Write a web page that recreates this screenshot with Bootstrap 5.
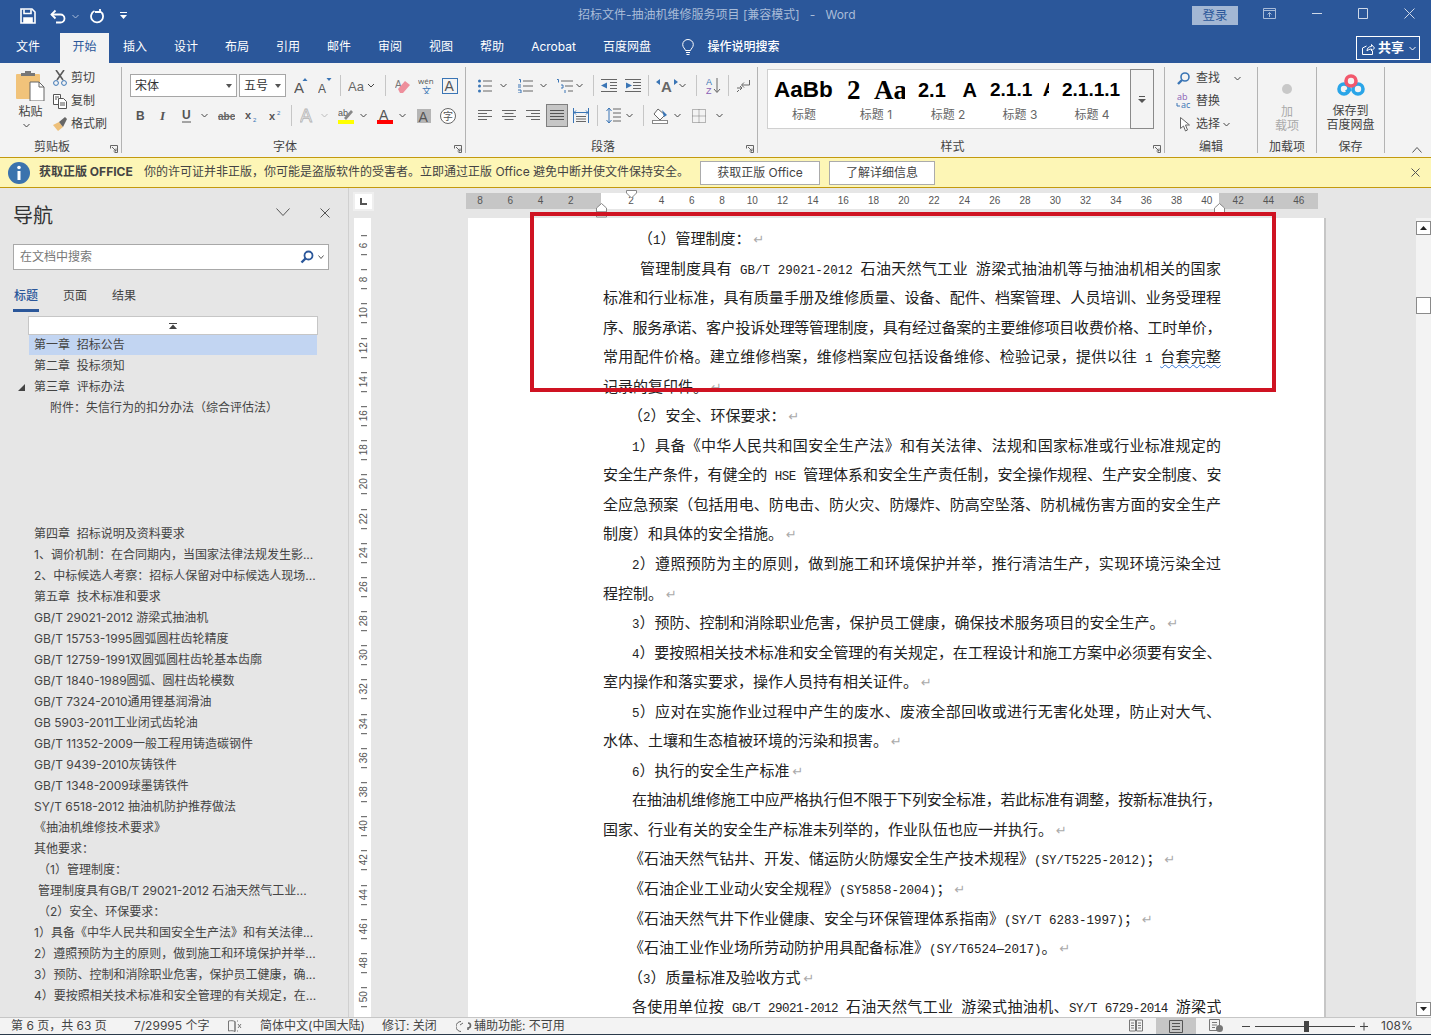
<!DOCTYPE html>
<html lang="zh-CN">
<head>
<meta charset="utf-8">
<title>招标文件-抽油机维修服务项目 - Word</title>
<link href="https://cdn.jsdelivr.net/npm/bootstrap@5.3.0/dist/css/bootstrap.min.css" rel="stylesheet">
<style>
html,body{height:100%;overflow:hidden}
body{font-family:Inter,"Noto Sans CJK SC",sans-serif;font-size:12px;color:#444;background:#e6e6e6;line-height:1.2}
svg{display:block;flex:none}
.titlebar{height:32px;background:#2b579a;color:#fff;position:relative}
.qat{padding-left:20px}
.doc-title{position:absolute;left:578px;top:8px;color:#a9bcd8;font-size:12px;white-space:nowrap}
.login{position:absolute;left:1192px;top:6px;width:46px;height:19px;background:#a3b7d4;color:#2b579a;text-align:center;line-height:19px;font-size:12.5px}
.winbtns{position:absolute;left:1263px;top:8px;gap:36px}
.tabbar{height:31px;background:#2b579a;color:#fff;position:relative}
.rtab{padding:0 12.5px;margin-right:2px;height:30px;margin-top:1px;line-height:27px;white-space:nowrap}
.rtab-first{padding:0 0 0 16px;width:60px;margin-right:0}
.rtab-on{background:#f3f3f3;color:#2b579a;width:49px;margin-right:1.5px}
.tell{margin-left:17px;line-height:28px;gap:13px;height:30px;font-weight:500}
.sharebtn{position:absolute;left:1356px;top:4px;width:64px;height:24px;border:1px solid #fff;gap:3px;padding-left:5px;font-weight:700;font-size:13px}
.ribbon{height:94px;background:#f3f3f3;position:relative;color:#444}
.rgroup{position:relative;height:86px;margin-top:4px;border-right:1px solid #b3b3b3;flex:none}
.w-clip{width:122px}.w-font{width:344px}.w-para{width:292px}.w-style{width:407px}.w-edit{width:93px}.w-add{width:59px}.w-save{width:68px}
.glabel{position:absolute;bottom:-2px;left:0;right:0;text-align:center;color:#444;line-height:16px}
.glabel-l{padding-right:17px}
.launcher{position:absolute;right:3px;bottom:0}
.rrow{position:absolute;display:flex;align-items:center}
.r1{top:7px;height:23px}.r2{top:37px;height:23px}
.r-font{left:8px}.r-para{left:12px}
.combo{height:23px;background:#fff;border:1px solid #a6a6a6;padding:0 4px;line-height:21px;color:#333;font-size:12px}
.combo-a{width:107px}.combo-b{width:47px;margin-left:2px}
.vsep{width:1px;height:21px;background:#c6c6c6;flex:none}
.mln3{margin-left:-3px}.ml1{margin-left:1px}.ml2{margin-left:2px}.ml3{margin-left:3px}.ml4{margin-left:4px}.ml5{margin-left:5px}.ml6{margin-left:6px}.ml7{margin-left:7px}.ml8{margin-left:8px}.ml9{margin-left:9px}.ml10{margin-left:10px}.ml11{margin-left:11px}.ml12{margin-left:12px}.ml14{margin-left:14px}.ml18{margin-left:18px}
.selbox{background:#c6c6c6;border:1px solid #7f7f7f;width:22px;height:23px;display:flex;align-items:center;justify-content:center}
.paste{position:absolute;left:15px;top:3px;width:31px;text-align:center}
.clip-item{position:absolute;left:53px;gap:4px;line-height:16px}
.ci1{top:3px}.ci2{top:26px}.ci3{top:49px}
.gallery{position:absolute;left:9px;top:2px;width:364px;height:60px;background:#fff;border:1px solid #d0d0d0;border-right:0}
.gitem{width:72px;flex:none;overflow:hidden;text-align:center;color:#666}
.gbig{width:65px;height:32px;color:#000;font-family:"Liberation Sans",sans-serif;font-weight:700;white-space:nowrap;text-align:left;padding-left:6px;font-size:20px;line-height:40px;overflow:hidden}
.gitem-sm{font-size:22.5px}
.gserif{font-family:"Liberation Serif",serif;font-size:27px;padding-left:7px}
.gs19{font-size:19px}
.gsub{line-height:16px;margin-top:5px;font-size:12px}
.gnext{position:absolute;left:372px;top:2px;width:24px;height:60px;border:1px solid #8a8a8a;display:flex;align-items:center;justify-content:center;background:#f3f3f3}
.edit-item{position:absolute;left:12px;gap:6px;line-height:16px}
.ei1{top:3px}.ei2{top:26px;gap:4px;left:11px}.ei3{top:49px}
.bigbtn{position:absolute;left:0;right:0;top:4px;text-align:center;line-height:14px}
.bigbtn svg{margin:0 auto 6px}
.savebtn{top:7px}
.savebtn svg{margin-bottom:8px}
.dim{color:#aaa}
.collapse-arrow{position:absolute;left:1412px;top:84px}
.banner{height:31px;background:#fdf6b6;border-top:1px solid #c39a0e;border-bottom:1px solid #c39a0e;padding-left:8px;position:relative;color:#444}
.bannerbold{font-weight:700;margin-left:9px;white-space:nowrap;width:95px;flex:none}
.bannertxt{margin-left:10px;white-space:nowrap;width:556px;flex:none}
.bbtn{background:#fff;border:1px solid #ababab;height:24px;line-height:21px;text-align:center;color:#444;padding:0;border-radius:0;font-size:12px}
.bbtn-a{width:120px}.bbtn-b{width:106px;margin-left:9px}
.bclose{position:absolute;left:1411px;top:10px}
.mainzone{height:829px;overflow:hidden}
.navpane{width:349px;flex:none;border-right:1px solid #d0d0d0;position:relative;background:#e6e6e6;height:829px;overflow:hidden}
.navhead{padding:16px 18px 0 13px;height:56px}
.navctl{gap:30px}
.navtitle{font-size:20px;color:#333;line-height:24px}
.navsearch{margin:0 19px 0 13px;height:26px;background:#fff;border:1px solid #a8a8a8;padding:0 4px 0 6px;color:#777}
.navtabs{margin:15px 0 0 13px;height:27px}
.navtab{width:49px;padding-left:1px;line-height:22px;height:27px;color:#444;flex:none}
.navtab-on{color:#2b579a;font-weight:500;width:26px;margin-right:23px;border-bottom:3px solid #2b579a}
.navup{margin:4px 0 0 28px;width:290px;height:19px;background:#fff;border:1px solid #c6c6c6;display:flex;align-items:center;justify-content:center}
.navlist{width:302px;margin-left:15px;padding:0;list-style:none;height:666px;overflow:hidden}
.navlist li{height:21px;line-height:20px;padding-left:5px;margin-left:14px;color:#444;white-space:nowrap;position:relative}
.navlist .navsel{background:#c2d5f2;height:20px;margin-bottom:1px}
.navlist .lv2{padding-left:21px}
.navlist .lvx{padding-left:9px}
.navlist .lvb{height:105px}
.navtri{position:absolute;left:-11px;top:7px}
.rightzone{min-width:0}
.corner{width:21px;height:19px;background:#fff;border:2px solid #efefef;margin:4px 0 0 4px;flex:none;display:flex;align-items:center;justify-content:center}
.hruler{margin:5px 0 0 92px;width:852px;height:16px;position:relative;display:flex;background:#c6c6c6;font-family:"Liberation Sans",sans-serif;font-size:10px;color:#555;line-height:16px}
.hr-left{width:135px;flex:none;padding-right:15px;overflow:hidden;justify-content:flex-end}
.hr-mid{width:618px;flex:none;background:#fff;padding-left:15px}
.hr-right{flex:1;padding-left:4px}
.hnum{width:30.3px;flex:none;text-align:center}
.hmark{position:absolute}
.hm-a{left:130px;top:10px}.hm-b{left:160px;top:-3px}.hm-c{left:748px;top:10px}
.docrow{margin-top:7px}
.vruler{width:17px;margin-left:5px;background:#fff;flex:none;font-family:"Liberation Sans",sans-serif;font-size:10px;color:#555;overflow:hidden;padding-top:10px}
.vnum{width:17px;height:34.2px;padding-right:3px;display:flex;align-items:center;justify-content:center;position:relative;writing-mode:vertical-rl;transform:rotate(180deg)}
.vnum::before,.vnum::after{content:"";position:absolute;left:4px;width:6px;height:1px;background:#555}
.vnum::before{top:7px}.vnum::after{bottom:7px}
.docpage{width:858px;margin-left:97px;background:#fff;border-right:2px solid #c6c6c6;padding:5px 0 0 135px;position:relative;flex:none;font-family:"Noto Sans CJK SC",sans-serif;font-size:15px;color:#222}
.la{font-family:"Liberation Mono",monospace;font-size:12.5px}
.dl{width:618px;height:29.55px;line-height:29.55px;white-space:nowrap}
.jl{text-align:justify;text-align-last:justify;white-space:normal;overflow:hidden}
.t1{letter-spacing:-.5px}.t2{letter-spacing:-.8px}
.i29{padding-left:29px}.i37{padding-left:37px}.i35{padding-left:35px}.i25{padding-left:25px}.i26{padding-left:26px}
.pm{color:#aaa;font-size:13px;font-family:"DejaVu Sans",sans-serif;margin-left:3px}
.wavy{text-decoration:underline wavy #2f6fd0 1px;text-underline-offset:2px}
.redbox{position:absolute;left:62px;top:-6px;width:746px;height:180px;border:4px solid #cf1322;pointer-events:none}
.vscroll{width:15px;margin-left:90px;background:#f3f3f3;position:relative;flex:none}
.sbtn{position:absolute;left:0;width:15px;background:#fff;border:1px solid #8a8a8a;display:flex;align-items:center;justify-content:center}
.sb-up{top:3px;height:14px}.sb-thumb{top:79px;height:17px}.sb-down{bottom:5px;height:14px}
.statusbar{height:18px;background:#f3f3f3;border-top:1px solid #c6c6c6;border-bottom:1px solid #2a3a4a;position:relative;color:#444;white-space:nowrap}
.stl{padding-left:11px;height:16px;line-height:16px}
.s1{width:123px}.s2{width:94px}.s4{width:122px}.s5{width:74px}
.stactive{position:absolute;left:1156px;top:0;width:40px;height:16px;background:#c6c6c6;display:flex;align-items:center;justify-content:center}
.stb{position:absolute;top:1px}
.sb-read{left:1129px}.sb-web{left:1209px}.sb-zoom{left:1242px;top:1px}
.zoompct{position:absolute;left:1381px;top:0;line-height:16px}
</style>
</head>
<body class="d-flex flex-column">

<header class="titlebar d-flex align-items-center flex-none">
  <div class="qat d-flex align-items-center">
    <svg width="16" height="16" viewBox="0 0 16 16" fill="none" stroke="#fff" stroke-width="1.6"><path d="M1 1h11l3 3v11H1z"/><path d="M4 1.500v4h7v-4" /><path d="M4 15v-5h8v5" fill="#fff"/></svg>
    <svg class="ml14" width="16" height="15" viewBox="0 0 16 15" fill="none" stroke="#fff" stroke-width="1.8"><path d="M1.500 5.500h9a4 4 0 0 1 0 8H6"/><path d="M5.500 1.500l-4 4 4 4"/></svg>
    <svg class="ml6" width="7" height="5" viewBox="0 0 7 5" fill="none" stroke="#a9bcd8"><path d="M.5 1l3 3 3-3"/></svg>
    <svg class="ml11" width="15" height="15" viewBox="0 0 15 15" fill="none" stroke="#fff" stroke-width="1.8"><path d="M10 2.200A6 6 0 1 1 4.500 2"/><path d="M10.500 .5v4.500h-5" transform="translate(-.5 -2)"/></svg>
    <svg class="ml14" width="9" height="8" viewBox="0 0 9 8" fill="#fff"><path d="M1 0h7v1H1zM1 3h7L4.500 7z"/></svg>
  </div>
  <div class="doc-title">招标文件-抽油机维修服务项目 [兼容模式]&nbsp;&nbsp; -&nbsp;&nbsp; Word</div>
  <div class="login">登录</div>
  <div class="winbtns d-flex align-items-center">
    <svg width="13" height="11" viewBox="0 0 13 11" fill="none" stroke="#a9bcd8"><path d="M.5.500h12v10H.5zM.5 2.500h12M6.500 9V4.500M4.500 6.500l2-2 2 2"/></svg>
    <svg width="10" height="11" viewBox="0 0 10 11" stroke="#cfd9e8"><path d="M0 5.500h10"/></svg>
    <svg width="10" height="11" viewBox="0 0 10 11" fill="none" stroke="#cfd9e8"><path d="M.5.500h9v10h-9z"/></svg>
    <svg width="11" height="11" viewBox="0 0 11 11" stroke="#cfd9e8"><path d="M.5.500l10 10M10.500.5l-10 10"/></svg>
  </div>
</header>

<nav class="tabbar d-flex flex-none">
  <div class="rtab rtab-first">文件</div>
  <div class="rtab rtab-on">开始</div>
  <div class="rtab">插入</div><div class="rtab">设计</div><div class="rtab">布局</div><div class="rtab">引用</div><div class="rtab">邮件</div><div class="rtab">审阅</div><div class="rtab">视图</div><div class="rtab">帮助</div><div class="rtab">Acrobat</div><div class="rtab">百度网盘</div>
  <div class="tell d-flex align-items-center">
    <svg width="12" height="17" viewBox="0 0 12 17" fill="none" stroke="#fff"><path d="M3.500 11.500C3 9.500.7 8.500.7 5.500a5.300 5 0 0 1 10.600 0c0 3-2.300 4-2.800 6zM4 13.500h4M4.500 15.500h3"/></svg>
    <span>操作说明搜索</span>
  </div>
  <div class="sharebtn d-flex align-items-center">
    <svg width="13" height="13" viewBox="0 0 13 13" fill="none" stroke="#fff"><path d="M.5 6v6.500h10V9M.5 6l4-2M5 9c0-3 2-4.500 4.500-4.500V2.500l3 3.500-3 3V7C7.500 7 6 8 5 9z"/></svg>
    <span>共享</span>
    <svg class="ml2" width="7" height="5" viewBox="0 0 7 5" fill="none" stroke="#fff"><path d="M.5 1l3 3 3-3"/></svg>
  </div>
</nav>

<section class="ribbon d-flex flex-none">
  <div class="rgroup w-clip">
    <div class="paste">
      <svg width="30" height="31" viewBox="0 0 30 31"><rect x="1" y="4" width="24" height="25" rx="1" fill="#f1c37a"/><path d="M6 6V3h4V1h6v2h4v3z" fill="#777"/><path d="M15 12h9l5 5v14H15z" fill="#fff" stroke="#666"/><path d="M24 12v5h5" fill="none" stroke="#666"/></svg>
      <div class="mt-1">粘贴</div>
      <svg class="ms-2 mt-1" width="7" height="5" viewBox="0 0 7 5" fill="none" stroke="#444"><path d="M.5 1l3 3 3-3"/></svg>
    </div>
    <div class="clip-item ci1 d-flex align-items-center">
      <svg width="14" height="16" viewBox="0 0 14 16" fill="none" stroke="#5a5a5a"><path d="M3 0l7 10M11 0L4 10" stroke-width="1.600"/><circle cx="3" cy="13" r="2.400" stroke="#3a75b5"/><circle cx="11" cy="13" r="2.400" stroke="#3a75b5"/></svg><span>剪切</span>
    </div>
    <div class="clip-item ci2 d-flex align-items-center">
      <svg width="14" height="15" viewBox="0 0 14 15" fill="#fff" stroke="#555"><path d="M.5.500h7v10h-7z"/><path d="M5.500 4.500h5l3 3v7h-8z"/><path d="M2 3h4M2 5h2M7 9h5M7 11h5" /></svg><span>复制</span>
    </div>
    <div class="clip-item ci3 d-flex align-items-center">
      <svg width="14" height="14" viewBox="0 0 14 14"><path d="M0 8l6-3 4 5-5 4z" fill="#eec07a"/><path d="M6 5l6-5 2 2-4 8z" fill="#666"/></svg><span>格式刷</span>
    </div>
    <div class="glabel glabel-l">剪贴板</div>
    <svg class="launcher" width="8" height="8" viewBox="0 0 8 8" fill="none" stroke="#666"><path d="M.5 3.500v-3h7v7h-3M2 2l4 4M6 3.500V6H3.500"/></svg>
  </div>
  <div class="rgroup w-font">
    <div class="rrow r1 r-font">
      <div class="combo combo-a d-flex justify-content-between align-items-center"><span>宋体</span><svg width="6" height="4" viewBox="0 0 6 4" fill="#555"><path d="M0 0h6L3 4z"/></svg></div>
      <div class="combo combo-b d-flex justify-content-between align-items-center"><span>五号</span><svg width="6" height="4" viewBox="0 0 6 4" fill="#555"><path d="M0 0h6L3 4z"/></svg></div>
      <svg class="ml8" width="14" height="17" viewBox="0 0 14 17"><text x="0" y="16" font-family="Liberation Sans" font-size="15" fill="#555">A</text><path d="M8.500 4l2.500-3 2.500 3z" fill="#3a75b5"/></svg>
      <svg class="ml10" width="14" height="17" viewBox="0 0 14 17"><text x="0" y="16" font-family="Liberation Sans" font-size="12" fill="#555">A</text><path d="M8.500 1l2.500 3 2.500-3z" fill="#3a75b5"/></svg>
      <div class="vsep ml8"></div>
      <svg class="ml7" width="27" height="16" viewBox="0 0 27 16"><text x="0" y="13" font-family="Liberation Sans" font-size="13" fill="#666">Aa</text><path d="M20 6l3 3 3-3" fill="none" stroke="#444"/></svg>
      <div class="vsep ml10"></div>
      <svg class="ml9" width="15" height="16" viewBox="0 0 15 16"><text x="0" y="10" font-family="Liberation Sans" font-size="10" fill="#777">A</text><path d="M3 11l7-8 5 4-7 8H5z" fill="#ee8f9c"/></svg>
      <svg class="ml8" width="17" height="17" viewBox="0 0 17 17"><text x="0" y="7" font-family="Open Sans" font-size="8" fill="#555">wén</text><text x="4" y="17" font-family="Noto Sans CJK SC" font-size="9" fill="#3a75b5">文</text></svg>
      <svg class="ml7" width="16" height="16" viewBox="0 0 16 16"><rect x=".5" y=".5" width="15" height="15" fill="none" stroke="#3a75b5"/><text x="2.500" y="13" font-family="Liberation Sans" font-size="14" fill="#555">A</text></svg>
    </div>
    <div class="rrow r2 r-font">
      <svg class="ml6" width="9" height="13" viewBox="0 0 9 13"><text x="0" y="11" font-family="Liberation Sans" font-size="12" font-weight="700" fill="#555">B</text></svg>
      <svg class="ml14" width="9" height="13" viewBox="0 0 9 13"><text x="1" y="11" font-family="Liberation Serif" font-size="13" font-style="italic" font-weight="700" fill="#555">I</text></svg>
      <svg class="ml14" width="10" height="14" viewBox="0 0 10 14"><text x="0" y="10" font-family="Liberation Sans" font-size="12" font-weight="700" fill="#555">U</text><path d="M0 13h9" stroke="#555"/></svg>
      <svg class="ml9" width="7" height="5" viewBox="0 0 7 5" fill="none" stroke="#444"><path d="M.5 1l3 3 3-3"/></svg>
      <svg class="ml10" width="17" height="12" viewBox="0 0 17 12"><text x="0" y="10" font-family="Liberation Sans" font-size="10" font-weight="700" fill="#666">abc</text><path d="M0 6.500h17" stroke="#666"/></svg>
      <svg class="ml10" width="14" height="13" viewBox="0 0 14 13"><text x="0" y="10" font-family="Liberation Sans" font-size="11" font-weight="700" fill="#555">x</text><text x="8" y="13" font-family="Liberation Sans" font-size="6" fill="#3a75b5">2</text></svg>
      <svg class="ml10" width="14" height="13" viewBox="0 0 14 13"><text x="0" y="11" font-family="Liberation Sans" font-size="11" font-weight="700" fill="#555">x</text><text x="8" y="6" font-family="Liberation Sans" font-size="6" fill="#3a75b5">2</text></svg>
      <div class="vsep ml8"></div>
      <svg class="ml8" width="15" height="16" viewBox="0 0 15 16"><text x="0" y="14" font-family="Liberation Sans" font-size="18" fill="#f3f3f3" stroke="#b5b5b5" stroke-width=".8">A</text></svg>
      <svg class="ml6" width="7" height="5" viewBox="0 0 7 5" fill="none" stroke="#bbb"><path d="M.5 1l3 3 3-3"/></svg>
      <svg class="ml10" width="16" height="16" viewBox="0 0 16 16"><text x="0" y="8" font-family="Liberation Sans" font-size="9" fill="#555">ab</text><path d="M6 10l7-8 2 2-7 8z" fill="#888"/><rect y="12" width="16" height="4" fill="#ff0"/></svg>
      <svg class="ml6" width="7" height="5" viewBox="0 0 7 5" fill="none" stroke="#444"><path d="M.5 1l3 3 3-3"/></svg>
      <svg class="ml10" width="16" height="16" viewBox="0 0 16 16"><text x="2" y="12" font-family="Liberation Sans" font-size="14" fill="#555">A</text><rect y="12" width="16" height="4" fill="#f00"/></svg>
      <svg class="ml6" width="7" height="5" viewBox="0 0 7 5" fill="none" stroke="#444"><path d="M.5 1l3 3 3-3"/></svg>
      <svg class="ml11" width="14" height="14" viewBox="0 0 14 14"><rect width="14" height="14" fill="#b5b5b5"/><text x="1.500" y="12.500" font-family="Liberation Sans" font-size="14" fill="#555">A</text></svg>
      <svg class="ml9" width="16" height="16" viewBox="0 0 16 16"><circle cx="8" cy="8" r="7.500" fill="#fff" stroke="#666"/><text x="3" y="12" font-family="Noto Sans CJK SC" font-size="10" fill="#555">字</text></svg>
    </div>
    <div class="glabel glabel-l">字体</div>
    <svg class="launcher" width="8" height="8" viewBox="0 0 8 8" fill="none" stroke="#666"><path d="M.5 3.500v-3h7v7h-3M2 2l4 4M6 3.500V6H3.500"/></svg>
  </div>
  <div class="rgroup w-para">
    <div class="rrow r1 r-para">
      <svg width="14" height="14" viewBox="0 0 14 14" stroke="#666"><path d="M5 2h9M5 7h9M5 12h9"/><g fill="#3a75b5" stroke="none"><circle cx="1.500" cy="2" r="1.500"/><circle cx="1.500" cy="7" r="1.500"/><circle cx="1.500" cy="12" r="1.500"/></g></svg>
      <svg class="ml8" width="7" height="5" viewBox="0 0 7 5" fill="none" stroke="#444"><path d="M.5 1l3 3 3-3"/></svg>
      <svg class="ml11" width="15" height="14" viewBox="0 0 15 14" stroke="#666"><path d="M5 2h10M5 7h10M5 12h10"/><g stroke="#3a75b5" fill="none"><path d="M1 .5h1.500v3M0 8h3M3 6H0M0 11h3v3H0"/></g></svg>
      <svg class="ml7" width="7" height="5" viewBox="0 0 7 5" fill="none" stroke="#444"><path d="M.5 1l3 3 3-3"/></svg>
      <svg class="ml9" width="17" height="14" viewBox="0 0 17 14" stroke="#666"><path d="M5 2h12M9 7h8M12 12h5"/><g stroke="#3a75b5" fill="none"><path d="M1 .5h1.500v3M5 6h2v3H5M9 11v3"/></g></svg>
      <svg class="ml3" width="7" height="5" viewBox="0 0 7 5" fill="none" stroke="#444"><path d="M.5 1l3 3 3-3"/></svg>
      <div class="vsep ml10"></div>
      <svg class="ml7" width="16" height="13" viewBox="0 0 16 13" stroke="#666"><path d="M0 .5h16M9 3.500h7M9 6.500h7M9 9.500h7M0 12.500h16"/><path d="M6 3.500v6L0 6.500z" fill="#3a75b5" stroke="none"/></svg>
      <svg class="ml8" width="16" height="13" viewBox="0 0 16 13" stroke="#666"><path d="M0 .5h16M8 3.500h8M8 6.500h8M8 9.500h8M0 12.500h16"/><path d="M1 3.500v6l6-3z" fill="#3a75b5" stroke="none"/></svg>
      <div class="vsep ml7"></div>
      <svg class="ml7" width="22" height="15" viewBox="0 0 22 15"><text x="5" y="14" font-family="Liberation Sans" font-size="15" font-weight="700" fill="#666">A</text><path d="M0 4l4-3v6zM22 4l-4-3v6z" fill="#3a75b5"/></svg>
      <svg class="ml1" width="7" height="5" viewBox="0 0 7 5" fill="none" stroke="#444"><path d="M.5 1l3 3 3-3"/></svg>
      <div class="vsep ml10"></div>
      <svg class="ml9" width="15" height="17" viewBox="0 0 15 17"><text x="0" y="8" font-family="Liberation Sans" font-size="9" fill="#3a75b5">A</text><text x="0" y="17" font-family="Liberation Sans" font-size="9" fill="#8a5fb5">Z</text><path d="M11 1v14M8 12l3 3.500 3-3.500" fill="none" stroke="#666"/></svg>
      <div class="vsep ml7"></div>
      <svg class="ml8" width="13" height="14" viewBox="0 0 13 14" fill="none" stroke="#666"><path d="M12.500 1v5H5M7 3.500L4.500 6 7 8.500"/><path d="M0 9h5M3 7l2 2-2 2M0 13l2-2"/></svg>
    </div>
    <div class="rrow r2 r-para">
      <svg width="14" height="11" viewBox="0 0 14 11" stroke="#666"><path d="M0 .5h14M0 3.500h9M0 6.500h14M0 9.500h9"/></svg>
      <svg class="ml10" width="14" height="11" viewBox="0 0 14 11" stroke="#666"><path d="M0 .5h14M2.500 3.500h9M0 6.500h14M2.500 9.500h9"/></svg>
      <svg class="ml10" width="14" height="11" viewBox="0 0 14 11" stroke="#666"><path d="M0 .5h14M5 3.500h9M0 6.500h14M5 9.500h9"/></svg>
      <div class="selbox ml6"><svg width="14" height="11" viewBox="0 0 14 11" stroke="#555"><path d="M0 .5h14M0 3.500h14M0 6.500h14M0 9.500h14"/></svg></div>
      <svg class="ml5" width="16" height="16" viewBox="0 0 16 16" stroke="#666"><path d="M.5 0v15M15.500 0v15" stroke="#3a75b5"/><path d="M3 2.500l-2 2 2 2M13 2.500l2 2-2 2M1 4.500h14" fill="none" stroke="#3a75b5"/><path d="M3 8.500h10M3 11h10M3 13.500h10"/></svg>
      <div class="vsep ml8"></div>
      <svg class="ml8" width="15" height="17" viewBox="0 0 15 17" stroke="#666"><path d="M7 2h8M7 6h8M7 10h8M7 14h8"/><path d="M3 1v15M.5 4L3 1l2.500 3M.5 13L3 16l2.500-3" fill="none" stroke="#3a75b5"/></svg>
      <svg class="ml5" width="7" height="5" viewBox="0 0 7 5" fill="none" stroke="#444"><path d="M.5 1l3 3 3-3"/></svg>
      <div class="vsep ml10"></div>
      <svg class="ml8" width="16" height="16" viewBox="0 0 16 16"><path d="M6 1l7 6-5 5-6-6z" fill="#fff" stroke="#666"/><path d="M10 2l5 5-3 2z" fill="#3a75b5"/><rect x=".5" y="12.500" width="15" height="3" fill="#fff" stroke="#888"/></svg>
      <svg class="ml6" width="7" height="5" viewBox="0 0 7 5" fill="none" stroke="#444"><path d="M.5 1l3 3 3-3"/></svg>
      <svg class="ml11" width="14" height="14" viewBox="0 0 14 14" fill="none" stroke="#777" stroke-dasharray="1 1"><path d="M.5.500h13v13H.5zM7 .5v13M.5 7h13"/></svg>
      <svg class="ml10" width="7" height="5" viewBox="0 0 7 5" fill="none" stroke="#444"><path d="M.5 1l3 3 3-3"/></svg>
    </div>
    <div class="glabel glabel-l">段落</div>
    <svg class="launcher" width="8" height="8" viewBox="0 0 8 8" fill="none" stroke="#666"><path d="M.5 3.500v-3h7v7h-3M2 2l4 4M6 3.500V6H3.500"/></svg>
  </div>
  <div class="rgroup w-style">
    <div class="gallery d-flex">
      <div class="gitem"><div class="gbig gitem-sm">AaBb(</div><div class="gsub">标题</div></div>
      <div class="gitem"><div class="gbig gserif">2&nbsp;&nbsp;Aa</div><div class="gsub">标题 1</div></div>
      <div class="gitem"><div class="gbig">2.1&nbsp;&nbsp;&nbsp;A:</div><div class="gsub">标题 2</div></div>
      <div class="gitem"><div class="gbig gs19">2.1.1&nbsp;&nbsp;A</div><div class="gsub">标题 3</div></div>
      <div class="gitem"><div class="gbig gs19">2.1.1.1</div><div class="gsub">标题 4</div></div>
    </div>
    <div class="gnext"><svg width="8" height="7" viewBox="0 0 8 7" fill="#555"><path d="M1 0h6v1H1zM0 3h8L4 7z"/></svg></div>
    <div class="glabel glabel-l">样式</div>
    <svg class="launcher" width="8" height="8" viewBox="0 0 8 8" fill="none" stroke="#666"><path d="M.5 3.500v-3h7v7h-3M2 2l4 4M6 3.500V6H3.500"/></svg>
  </div>
  <div class="rgroup w-edit">
    <div class="edit-item ei1 d-flex align-items-center">
      <svg width="13" height="13" viewBox="0 0 13 13" fill="none" stroke="#3a75b5" stroke-width="1.600"><circle cx="8" cy="5" r="4"/><path d="M5 8l-4 4" stroke-width="2.400"/></svg><span>查找</span>
      <svg class="ml8" width="7" height="5" viewBox="0 0 7 5" fill="none" stroke="#444"><path d="M.5 1l3 3 3-3"/></svg>
    </div>
    <div class="edit-item ei2 d-flex align-items-center">
      <svg width="16" height="16" viewBox="0 0 16 16"><text x="1" y="7" font-family="Open Sans" font-size="9" fill="#8a5fb5">ab</text><text x="5" y="15" font-family="Open Sans" font-size="9" fill="#3a75b5">ac</text><path d="M1 10v3h3" fill="none" stroke="#3a75b5"/></svg><span>替换</span>
    </div>
    <div class="edit-item ei3 d-flex align-items-center">
      <svg class="ml3" width="10" height="15" viewBox="0 0 10 15" fill="#fff" stroke="#666"><path d="M.5.500v11l3-2.500 2 5 2-1-2-5h4z"/></svg><span>选择</span>
      <svg class="mln3" width="7" height="5" viewBox="0 0 7 5" fill="none" stroke="#444"><path d="M.5 1l3 3 3-3"/></svg>
    </div>
    <div class="glabel">编辑</div>
  </div>
  <div class="rgroup w-add">
    <div class="bigbtn dim">
      <svg class="mt-2" width="12" height="20" viewBox="0 0 12 20"><circle cx="6" cy="10" r="5" fill="#c8c8c8"/></svg>
      <div>加</div><div>载项</div>
    </div>
    <div class="glabel">加载项</div>
  </div>
  <div class="rgroup w-save">
    <div class="bigbtn savebtn">
      <svg width="28" height="22" viewBox="0 0 28 22" fill="none" stroke-width="3.600"><circle cx="7" cy="15" r="5" stroke="#2aa5e8"/><circle cx="21" cy="15" r="5" stroke="#2aa5e8"/><circle cx="14" cy="7" r="5" stroke="#f2586c"/><path d="M9 18l5-3" stroke="#2aa5e8"/></svg>
      <div>保存到</div><div>百度网盘</div>
    </div>
    <div class="glabel">保存</div>
  </div>
  <svg class="collapse-arrow" width="10" height="6" viewBox="0 0 10 6" fill="none" stroke="#555"><path d="M.5 5.500l4.500-5 4.500 5"/></svg>
</section>

<div class="banner d-flex align-items-center flex-none">
  <svg width="22" height="22" viewBox="0 0 22 22"><circle cx="11" cy="11" r="11" fill="#3b73ad"/><rect x="9.500" y="9" width="3" height="9" fill="#fff"/><circle cx="11" cy="5.500" r="1.800" fill="#fff"/></svg>
  <span class="bannerbold">获取正版 OFFICE</span>
  <span class="bannertxt">你的许可证并非正版，你可能是盗版软件的受害者。立即通过正版 Office 避免中断并使文件保持安全。</span>
  <button type="button" class="btn bbtn bbtn-a">获取正版 Office</button>
  <button type="button" class="btn bbtn bbtn-b">了解详细信息</button>
  <svg class="bclose" width="9" height="9" viewBox="0 0 9 9" stroke="#555"><path d="M.5.500l8 8M8.500.500l-8 8"/></svg>
</div>

<main class="mainzone d-flex flex-none">
  <aside class="navpane">
    <div class="navhead d-flex justify-content-between">
      <div class="navtitle">导航</div>
      <div class="d-flex navctl">
        <svg class="mt-1" width="14" height="8" viewBox="0 0 14 8" fill="none" stroke="#555"><path d="M.5.500L7 7.500 13.500.5"/></svg>
        <svg class="mt-1" width="10" height="10" viewBox="0 0 10 10" stroke="#555"><path d="M.5.500l9 9M9.500.500l-9 9"/></svg>
      </div>
    </div>
    <div class="navsearch d-flex align-items-center justify-content-between">
      <span>在文档中搜索</span>
      <span class="d-flex align-items-center gap-1">
        <svg width="14" height="14" viewBox="0 0 14 14" fill="none" stroke="#2b579a" stroke-width="1.800"><circle cx="8.500" cy="5.500" r="4"/><path d="M5.500 8.500l-4 4" stroke-width="2.400"/></svg>
        <svg width="6" height="4" viewBox="0 0 6 4" fill="none" stroke="#555"><path d="M.5.500l2.500 3 2.500-3"/></svg>
      </span>
    </div>
    <div class="navtabs d-flex">
      <div class="navtab navtab-on">标题</div><div class="navtab">页面</div><div class="navtab">结果</div>
    </div>
    <div class="navup"><svg width="8" height="6" viewBox="0 0 8 6" fill="#444"><path d="M0 0h8v1H0zM4 1.500L8 6H0z"/></svg></div>
    <ul class="navlist">
      <li class="navsel">第一章&nbsp; 招标公告</li>
      <li>第二章&nbsp; 投标须知</li>
      <li><svg class="navtri" width="7" height="7" viewBox="0 0 7 7" fill="#444"><path d="M7 0v7H0z"/></svg>第三章&nbsp; 评标办法</li>
      <li class="lv2">附件：失信行为的扣分办法（综合评估法）</li>
      <li class="lvb"></li>
      <li>第四章&nbsp; 招标说明及资料要求</li>
      <li>1、调价机制：在合同期内，当国家法律法规发生影...</li>
      <li>2、中标候选人考察：招标人保留对中标候选人现场...</li>
      <li>第五章&nbsp; 技术标准和要求</li>
      <li>GB/T 29021-2012 游梁式抽油机</li>
      <li>GB/T 15753-1995圆弧圆柱齿轮精度</li>
      <li>GB/T 12759-1991双圆弧圆柱齿轮基本齿廓</li>
      <li>GB/T 1840-1989圆弧、圆柱齿轮模数</li>
      <li>GB/T 7324-2010通用锂基润滑油</li>
      <li>GB 5903-2011工业闭式齿轮油</li>
      <li>GB/T 11352-2009一般工程用铸造碳钢件</li>
      <li>GB/T 9439-2010灰铸铁件</li>
      <li>GB/T 1348-2009球墨铸铁件</li>
      <li>SY/T 6518-2012 抽油机防护推荐做法</li>
      <li>《抽油机维修技术要求》</li>
      <li>其他要求：</li>
      <li class="lvx">（1）管理制度：</li>
      <li class="lvx">管理制度具有GB/T 29021-2012 石油天然气工业...</li>
      <li class="lvx">（2）安全、环保要求：</li>
      <li>1）具备《中华人民共和国安全生产法》和有关法律...</li>
      <li>2）遵照预防为主的原则，做到施工和环境保护并举...</li>
      <li>3）预防、控制和消除职业危害，保护员工健康，确...</li>
      <li>4）要按照相关技术标准和安全管理的有关规定，在...</li>
    </ul>
  </aside>

  <div class="rightzone flex-grow-1 d-flex flex-column">
    <div class="d-flex flex-none">
      <div class="corner"><svg width="7" height="7" viewBox="0 0 7 7" fill="#555"><path d="M0 0h2v5h5v2H0z"/></svg></div>
      <div class="hruler">
        <div class="hr-left d-flex"><span class="hnum">8</span><span class="hnum">6</span><span class="hnum">4</span><span class="hnum">2</span></div>
        <div class="hr-mid d-flex"><span class="hnum">2</span><span class="hnum">4</span><span class="hnum">6</span><span class="hnum">8</span><span class="hnum">10</span><span class="hnum">12</span><span class="hnum">14</span><span class="hnum">16</span><span class="hnum">18</span><span class="hnum">20</span><span class="hnum">22</span><span class="hnum">24</span><span class="hnum">26</span><span class="hnum">28</span><span class="hnum">30</span><span class="hnum">32</span><span class="hnum">34</span><span class="hnum">36</span><span class="hnum">38</span><span class="hnum">40</span></div>
        <div class="hr-right d-flex"><span class="hnum">42</span><span class="hnum">44</span><span class="hnum">46</span></div>
        <svg class="hmark hm-a" width="11" height="15" viewBox="0 0 11 15" fill="#fff" stroke="#888"><path d="M.5 5l5-4.500 5 4.500v4H.5zM.5 9h10v5H.5z"/></svg>
        <svg class="hmark hm-b" width="11" height="9" viewBox="0 0 11 9" fill="#fff" stroke="#888"><path d="M.5.500h10V3l-5 5-5-5z"/></svg>
        <svg class="hmark hm-c" width="11" height="10" viewBox="0 0 11 10" fill="#fff" stroke="#888"><path d="M.5 5l5-4.500 5 4.500v4.500H.5z"/></svg>
      </div>
    </div>
    <div class="d-flex flex-grow-1 docrow">
      <div class="vruler">
        <div class="vnum">6</div><div class="vnum">8</div><div class="vnum">10</div><div class="vnum">12</div><div class="vnum">14</div><div class="vnum">16</div><div class="vnum">18</div><div class="vnum">20</div><div class="vnum">22</div><div class="vnum">24</div><div class="vnum">26</div><div class="vnum">28</div><div class="vnum">30</div><div class="vnum">32</div><div class="vnum">34</div><div class="vnum">36</div><div class="vnum">38</div><div class="vnum">40</div><div class="vnum">42</div><div class="vnum">44</div><div class="vnum">46</div><div class="vnum">48</div><div class="vnum">50</div>
      </div>
      <article class="docpage">
        <div class="dl i35">（<span class="la">1</span>）管理制度：<span class="pm">↵</span></div>
        <div class="dl jl i37">管理制度具有<span class="la"> GB/T 29021-2012 </span>石油天然气工业<span class="la"> </span>游梁式抽油机等与抽油机相关的国家</div>
        <div class="dl jl">标准和行业标准，具有质量手册及维修质量、设备、配件、档案管理、人员培训、业务受理程</div>
        <div class="dl jl t1">序、服务承诺、客户投诉处理等管理制度，具有经过备案的主要维修项目收费价格、工时单价，</div>
        <div class="dl jl">常用配件价格。建立维修档案，维修档案应包括设备维修、检验记录，提供以往<span class="la"> 1 </span><span class="wavy">台套完整</span></div>
        <div class="dl">记录的复印件。<span class="pm">↵</span></div>
        <div class="dl i25">（<span class="la">2</span>）安全、环保要求：<span class="pm">↵</span></div>
        <div class="dl jl i29"><span class="la">1</span>）具备《中华人民共和国安全生产法》和有关法律、法规和国家标准或行业标准规定的</div>
        <div class="dl jl t1">安全生产条件，有健全的<span class="la"> HSE </span>管理体系和安全生产责任制，安全操作规程、生产安全制度、安</div>
        <div class="dl jl">全应急预案（包括用电、防电击、防火灾、防爆炸、防高空坠落、防机械伤害方面的安全生产</div>
        <div class="dl">制度）和具体的安全措施。<span class="pm">↵</span></div>
        <div class="dl jl i29"><span class="la">2</span>）遵照预防为主的原则，做到施工和环境保护并举，推行清洁生产，实现环境污染全过</div>
        <div class="dl">程控制。<span class="pm">↵</span></div>
        <div class="dl i29"><span class="la">3</span>）预防、控制和消除职业危害，保护员工健康，确保技术服务项目的安全生产。<span class="pm">↵</span></div>
        <div class="dl jl i29 t1"><span class="la">4</span>）要按照相关技术标准和安全管理的有关规定，在工程设计和施工方案中必须要有安全、</div>
        <div class="dl">室内操作和落实要求，操作人员持有相关证件。<span class="pm">↵</span></div>
        <div class="dl jl i29"><span class="la">5</span>）应对在实施作业过程中产生的废水、废液全部回收或进行无害化处理，防止对大气、</div>
        <div class="dl">水体、土壤和生态植被环境的污染和损害。<span class="pm">↵</span></div>
        <div class="dl i29"><span class="la">6</span>）执行的安全生产标准<span class="pm">↵</span></div>
        <div class="dl jl i29 t2">在抽油机维修施工中应严格执行但不限于下列安全标准，若此标准有调整，按新标准执行，</div>
        <div class="dl">国家、行业有关的安全生产标准未列举的，作业队伍也应一并执行。<span class="pm">↵</span></div>
        <div class="dl i26">《石油天然气钻井、开发、储运防火防爆安全生产技术规程》<span class="la">(SY/T5225-2012)</span>；<span class="pm">↵</span></div>
        <div class="dl i26">《石油企业工业动火安全规程》<span class="la">(SY5858-2004)</span>；<span class="pm">↵</span></div>
        <div class="dl i26">《石油天然气井下作业健康、安全与环保管理体系指南》<span class="la">(SY/T 6283-1997)</span>；<span class="pm">↵</span></div>
        <div class="dl i26">《石油工业作业场所劳动防护用具配备标准》<span class="la">(SY/T6524—2017)</span>。<span class="pm">↵</span></div>
        <div class="dl i25">（<span class="la">3</span>）质量标准及验收方式<span class="pm">↵</span></div>
        <div class="dl jl i29 t1">各使用单位按<span class="la"> GB/T 29021-2012 </span>石油天然气工业<span class="la"> </span>游梁式抽油机、<span class="la">SY/T 6729-2014 </span>游梁式</div>
        <div class="redbox"></div>
      </article>
      <div class="vscroll">
        <div class="sbtn sb-up"><svg width="7" height="4" viewBox="0 0 7 4" fill="#222"><path d="M3.500 0L7 4H0z"/></svg></div>
        <div class="sbtn sb-thumb"></div>
        <div class="sbtn sb-down"><svg width="7" height="4" viewBox="0 0 7 4" fill="#222"><path d="M0 0h7L3.500 4z"/></svg></div>
      </div>
    </div>
  </div>
</main>

<footer class="statusbar flex-none">
  <div class="stl d-flex align-items-center">
    <span class="s1">第 6 页，共 63 页</span>
    <span class="s2">7/29995 个字</span>
    <svg width="14" height="13" viewBox="0 0 14 13" fill="none" stroke="#777"><path d="M7 1.500C5 .5 3 .5.500 1v10c2.500-.5 4.500-.5 6.500.5zM7 1.500v10M9 1h1M9 11h1"/><path d="M10 4l3 4M13 4l-3 4"/></svg>
    <span class="s4 ml18">简体中文(中国大陆)</span>
    <span class="s5">修订: 关闭</span>
    <svg width="16" height="13" viewBox="0 0 16 13" fill="none" stroke="#666"><path d="M5 1.500a5 5 0 1 0 0 10M4 5l3-2"/><path d="M12 3a2.500 2.500 0 0 1 0 5v2" stroke-width="1.600"/></svg>
    <span class="ml2">辅助功能: 不可用</span>
  </div>
  <svg class="stb sb-read" width="14" height="13" viewBox="0 0 14 13" fill="none" stroke="#777"><path d="M.5 1h6v11h-6zM7.500 1h6v11h-6zM2 4h3M2 6.500h3M2 9h3M9 4h3M9 6.500h3M9 9h3"/></svg>
  <div class="stactive"><svg width="14" height="13" viewBox="0 0 14 13" fill="none" stroke="#555"><path d="M.5.500h13v12H.5zM3 3.500h8M3 6.500h8M3 9.500h8"/></svg></div>
  <svg class="stb sb-web" width="14" height="13" viewBox="0 0 14 13" fill="none" stroke="#777"><path d="M.5.500h10v11H.5zM3 3.500h5M3 6h5M3 8.500h3"/><circle cx="10.500" cy="9.500" r="3.500" fill="#777" stroke="none"/></svg>
  <svg class="stb sb-zoom" width="126" height="14" viewBox="0 0 126 14" stroke="#444"><path d="M0 7.500h8M13 7.500h100M118 7.500h8M122 3.500v8"/><rect x="62" y="2" width="5" height="11" fill="#444" stroke="none"/></svg>
  <span class="zoompct">108%</span>
</footer>

<script src="https://cdn.jsdelivr.net/npm/bootstrap@5.3.0/dist/js/bootstrap.bundle.min.js"></script>
</body>
</html>
